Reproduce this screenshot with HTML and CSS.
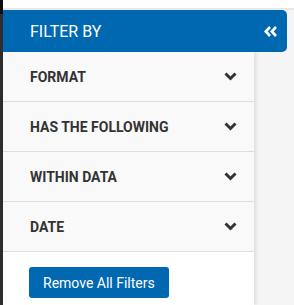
FILE: index.html
```html
<!DOCTYPE html>
<html lang="en">
<head>
  <meta charset="UTF-8" />
  <meta name="viewport" content="width=device-width, initial-scale=1.0"/>
  <title>Filter By</title>
  <link rel="stylesheet" href="styles.css">
</head>
<body>

  <div class="page">
    <div class="edge"><div class="edge-top"></div></div>

    <div class="main">
      <div class="topbar"></div>

      <div class="filter-head">
        <span>FILTER BY</span>
        <svg class="collapse" width="13" height="11" viewBox="0 0 13 11">
          <polyline points="6,1 1.8,5.5 6,10" />
          <polyline points="12,1 7.8,5.5 12,10" />
        </svg>
      </div>

      <div class="filter-panel">
        <div class="filter-row">
          <span>FORMAT</span>
          <svg class="chevron" width="13" height="9" viewBox="0 0 13 9"><polyline points="1.5,1.5 6.5,6.5 11.5,1.5" /></svg>
        </div>
        <div class="filter-row">
          <span>HAS THE FOLLOWING</span>
          <svg class="chevron" width="13" height="9" viewBox="0 0 13 9"><polyline points="1.5,1.5 6.5,6.5 11.5,1.5" /></svg>
        </div>
        <div class="filter-row">
          <span>WITHIN DATA</span>
          <svg class="chevron" width="13" height="9" viewBox="0 0 13 9"><polyline points="1.5,1.5 6.5,6.5 11.5,1.5" /></svg>
        </div>
        <div class="filter-row">
          <span>DATE</span>
          <svg class="chevron" width="13" height="9" viewBox="0 0 13 9"><polyline points="1.5,1.5 6.5,6.5 11.5,1.5" /></svg>
        </div>

        <div class="filter-actions">
          <button class="remove-btn">Remove All Filters</button>
        </div>
      </div>
    </div>
  </div>

</body>
</html>
```

FILE: styles.css
```css
body {
  margin: 0;
  font-family: Roboto, 'Liberation Sans', sans-serif;
  background-color: #f5f5f5;
  height: 305px;
  overflow: hidden;
}

.page {
  display: flex;
  height: 305px;
}

.edge {
  width: 3px;
  background-color: #2e2e2e;
  flex-shrink: 0;
}

.edge-top {
  height: 14px;
  background-color: #0d0d0d;
}

.main {
  flex: 1;
  display: flex;
  flex-direction: column;
}

.topbar {
  height: 8px;
  background-color: #ffffff;
  border-bottom: 2px solid #e8e8e8;
}

.filter-head {
  width: 284px;
  height: 42px;
  box-sizing: border-box;
  display: flex;
  align-items: center;
  justify-content: space-between;
  padding: 0 10px 0 27px;
  background-color: #0067b1;
  color: #ffffff;
  font-size: 16px;
  border-radius: 0 5px 5px 0;
  position: relative;
  z-index: 1;
}

.collapse polyline {
  fill: none;
  stroke: #ffffff;
  stroke-width: 2.6;
}

.filter-panel {
  width: 251px;
  flex: 1;
  background-color: #ffffff;
  box-shadow: 2px 0 4px rgba(0, 0, 0, 0.1);
}

.filter-row {
  height: 49px;
  display: flex;
  align-items: center;
  justify-content: space-between;
  padding: 0 17px 0 27px;
  background-color: #f9f9f9;
  border-bottom: 1px solid #dddddd;
  color: #333333;
  font-size: 14px;
  font-weight: 700;
}

.chevron polyline {
  fill: none;
  stroke: #333333;
  stroke-width: 3;
}

.filter-actions {
  padding: 15px 0 0 26px;
}

.remove-btn {
  font-family: Roboto, 'Liberation Sans', sans-serif;
  font-size: 14px;
  color: #ffffff;
  background-color: #0067b1;
  border: none;
  border-radius: 3px;
  height: 31px;
  padding: 0 14px;
  cursor: pointer;
}
```
